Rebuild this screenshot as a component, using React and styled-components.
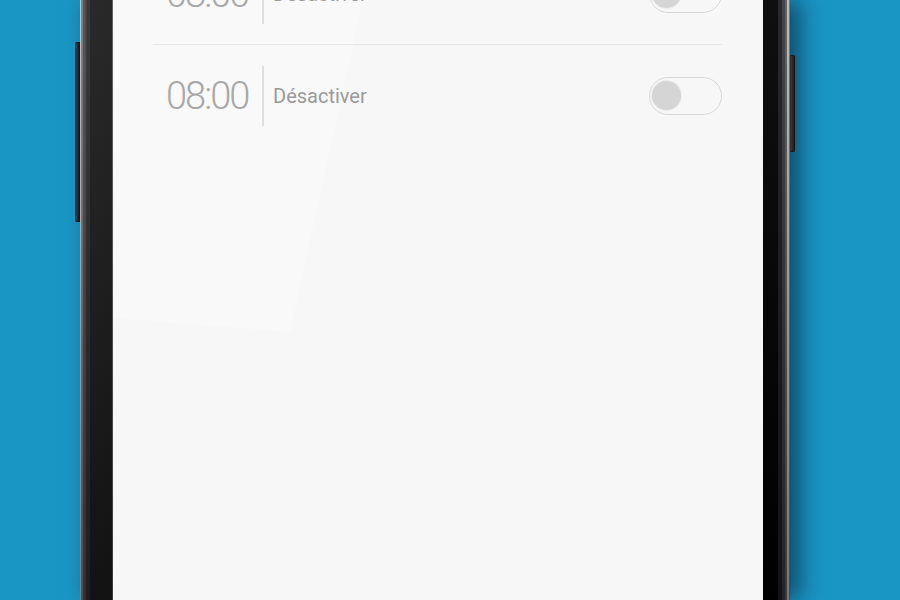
import React from "react";
import styled, { createGlobalStyle } from "styled-components";

const GlobalStyle = createGlobalStyle`
  html, body {
    margin: 0;
    padding: 0;
    height: 100%;
    overflow: hidden;
    background: #1a96c5;
    font-family: Roboto, "Noto Sans", "Liberation Sans", sans-serif;
  }
  #root{
    height: 100%;
  }
`;

const Stage = styled.div`
  height: 600px;
  padding-left: 80px;
  display: flex;
  align-items: stretch;
`;

const Phone = styled.div`
  position: relative;
  width: 710px;
  height: 100%;
  box-sizing: border-box;
  padding: 0 27px 0 33px;
  display: flex;
  box-shadow: 10px 0 22px rgba(0, 25, 45, 0.6);
  background:
    linear-gradient(to bottom, rgba(255,255,255,0.06), rgba(0,0,0,0.35)),
    linear-gradient(to right,
      #c0c0c2 0, #c0c0c2 1px,
      #7a7a7e 1px, #7a7a7e 3px,
      #4a4a4e 3px, #4a4a4e 6px,
      #2e2e31 6px, #2e2e31 10px,
      #1d1d1d 10px, #1b1b1b 32px,
      #5a5a5a 32px, #5a5a5a 33px,
      #000 683px, #000 698px,
      #1c1c20 698px, #1c1c20 702px,
      #38383c 702px, #38383c 705px,
      #5a5a5e 705px, #5a5a5e 707px,
      #b8b8bb 707px, #b8b8bb 709px,
      #6a6a6a 709px, #6a6a6a 710px);
`;

const SideButton = styled.div`
  position: absolute;
  top: ${p => p.$top}px;
  height: ${p => p.$height}px;
  width: 5px;
  ${p => p.$side === "left" ? "left: -5px;" : "right: -5px;"}
  background: linear-gradient(to right, #555 0, #2a2a2e 2px, #1e1e22 100%);
  border-radius: ${p => p.$side === "left" ? "2px 0 0 2px" : "0 2px 2px 0"};
  box-shadow: inset 0 0 0 1px rgba(0,0,0,0.4);
`;

const Screen = styled.div`
  position: relative;
  flex: 1;
  background: #f7f7f7;
  overflow: hidden;
`;

const Glare = styled.div`
  position: absolute;
  inset: 0;
  pointer-events: none;
  background: rgba(255, 255, 255, 0.28);
  clip-path: polygon(0 0, 250px 0, 177px 332px, 0 318px);
`;

const AlarmList = styled.div`
  position: relative;
  margin: -57px 41px 0 40px;
`;

const AlarmRow = styled.div`
  display: flex;
  align-items: center;
  height: 101px;
  padding: 0 0 0 13px;
  border-bottom: ${p => p.$last ? "none" : "1px solid #e7e7e7"};
`;

const Time = styled.span`
  font-family: Roboto, "Noto Sans", sans-serif;
  font-weight: 300;
  font-size: 38px;
  letter-spacing: -2px;
  color: #a8a8a8;
  width: 83px;
`;

const Separator = styled.span`
  width: 2px;
  height: 60px;
  margin-left: 13px;
  background: #e0e0e0;
`;

const Label = styled.span`
  margin-left: 9px;
  font-size: 20px;
  color: #9a9a9a;
  flex: 1;
`;

const Toggle = styled.div`
  width: 71px;
  height: 36px;
  border: 1px solid #d8d8d8;
  border-radius: 19px;
  box-sizing: content-box;
  display: flex;
  align-items: center;
`;

const Knob = styled.span`
  width: 29px;
  height: 29px;
  margin-left: 2px;
  border-radius: 50%;
  background: #d5d5d5;
  box-shadow: 0 0 0 1px #ececec;
`;

const alarms = [
  { time: "08:00", label: "Désactiver" },
  { time: "08:00", label: "Désactiver" },
];

export default function App() {
  return (
    <>
      <GlobalStyle />
      <Stage>
        <Phone>
          <SideButton $side="left" $top={42} $height={180} />
          <SideButton $side="right" $top={55} $height={97} />
          <Screen>
            <Glare />
            <AlarmList>
              {alarms.map((a, i) => (
                <AlarmRow key={i} $last={i === alarms.length - 1}>
                  <Time>{a.time}</Time>
                  <Separator />
                  <Label>{a.label}</Label>
                  <Toggle><Knob /></Toggle>
                </AlarmRow>
              ))}
            </AlarmList>
          </Screen>
        </Phone>
      </Stage>
    </>
  );
}
